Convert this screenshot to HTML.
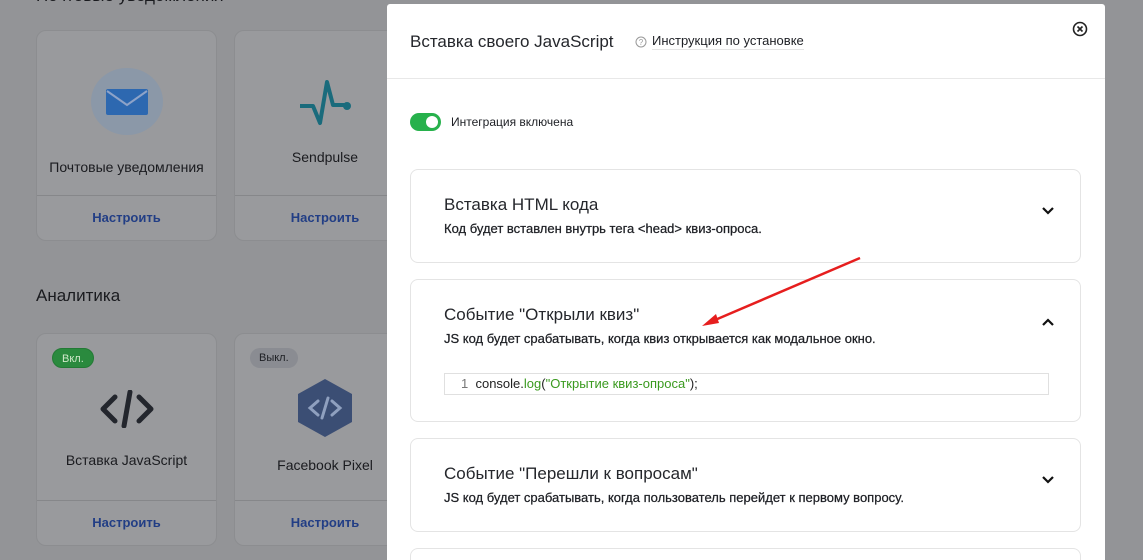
<!DOCTYPE html>
<html style="overflow:hidden;width:1143px;height:560px"><head><meta charset="utf-8"><style>
*{box-sizing:border-box;margin:0;padding:0}
body{width:1143px;height:560px;overflow:hidden;background:#939497;font-family:"Liberation Sans","Noto Sans CJK SC",sans-serif;position:relative;color:#1d1f24}
.card{position:absolute;background:#999a9d;border:1px solid #8c8d90;border-radius:10px}
.card .ft{position:absolute;left:0;right:0;bottom:0;height:45px;border-top:1px solid #86878a;text-align:center;line-height:44px;font-size:13px;font-weight:bold;color:#223e85}
.card .nm{position:absolute;left:0;right:0;text-align:center;font-size:14px;color:#1a1b1f}
.badge{position:absolute;top:14px;left:15px;height:20px;border-radius:10px;font-size:11px;line-height:20px;padding:0 9px}
.modal{position:absolute;left:387px;top:4px;width:718px;height:556px;background:#fff;border-radius:3px 3px 0 0;overflow:hidden}
.acc{position:absolute;left:23px;width:671px;border:1px solid #e4e4e4;border-radius:8px;background:#fff}
.acc h3{position:absolute;left:33px;font-weight:normal;font-size:17px;color:#25272c}
.acc p{position:absolute;left:33px;font-size:13px;color:#1d1f24;-webkit-text-stroke:0.25px #1d1f24}
.chev{position:absolute;right:25px;width:14px;height:10px}
</style></head><body>
<div style="position:absolute;left:36px;top:-14px;font-size:17px;color:#1a1b1f">Почтовые уведомления</div>
<div class="card" style="left:36px;top:30px;width:181px;height:211px">
 <div style="position:absolute;left:54px;top:37px;width:72px;height:67px;border-radius:50%;background:#8b98a8"></div>
 <svg style="position:absolute;left:68px;top:57px" width="44" height="28"><rect x="1" y="1" width="42" height="26" rx="2" fill="#2d68b0"/><path d="M2 3 L22 17 L42 3" stroke="#8ea3c8" stroke-width="2" fill="none"/></svg>
 <div class="nm" style="top:128px">Почтовые уведомления</div>
 <div class="ft">Настроить</div>
</div>
<div class="card" style="left:234px;top:30px;width:200px;height:211px">
 <svg style="position:absolute;left:63px;top:48px" width="54" height="48"><path d="M2 27 H15 L22 44 L29 3 L35 26 H48" stroke="#1a6b7c" stroke-width="4" fill="none" stroke-linejoin="round"/><circle cx="49" cy="27" r="4" fill="#1a6b7c"/></svg>
 <div class="nm" style="top:118px;width:180px">Sendpulse</div>
 <div class="ft" style="width:180px">Настроить</div>
</div>
<div style="position:absolute;left:36px;top:286px;font-size:17px;color:#1a1b1f">Аналитика</div>
<div class="card" style="left:36px;top:333px;width:181px;height:213px">
 <div class="badge" style="background:#2a8a3e;color:#cfe8c9;border:1px solid #237a35">Вкл.</div>
 <svg style="position:absolute;left:62px;top:56px" width="56" height="38"><path d="M16 7 L4 19 L16 31 M40 7 L52 19 L40 31 M31 2 L25 36" stroke="#23262d" stroke-width="5" fill="none" stroke-linecap="round" stroke-linejoin="round"/></svg>
 <div class="nm" style="top:118px">Вставка JavaScript</div>
 <div class="ft">Настроить</div>
</div>
<div class="card" style="left:234px;top:333px;width:200px;height:213px">
 <div class="badge" style="background:#8a8c92;color:#1d1f24">Выкл.</div>
 <svg style="position:absolute;left:63px;top:45px" width="54" height="58"><polygon points="27,0 54,15 54,43 27,58 0,43 0,15" fill="#3b4e74"/><path d="M20 22 L12 29 L20 36 M34 22 L42 29 L34 36 M30 19 L24 39" stroke="#8fa0bf" stroke-width="3" fill="none" stroke-linecap="round"/></svg>
 <div class="nm" style="top:123px;width:180px">Facebook Pixel</div>
 <div class="ft" style="width:180px">Настроить</div>
</div>

<div class="modal">
 <div style="position:absolute;left:23px;top:28px;font-size:17px;color:#25272c">Вставка своего JavaScript</div>
 <svg style="position:absolute;left:248px;top:32px" width="12" height="12"><circle cx="6" cy="6" r="5" stroke="#999" fill="none"/><text x="6" y="9" font-size="8" text-anchor="middle" fill="#999" font-family="Liberation Sans">?</text></svg>
 <div style="position:absolute;left:265px;top:29px;font-size:13px;color:#1d1f24;border-bottom:1px solid #e5e5e5;padding-bottom:1px">Инструкция по установке</div>
 <svg style="position:absolute;left:685px;top:17px" width="16" height="16"><circle cx="8" cy="8" r="6.5" stroke="#222" stroke-width="1.6" fill="none"/><path d="M5.5 5.5 L10.5 10.5 M10.5 5.5 L5.5 10.5" stroke="#222" stroke-width="1.6"/></svg>
 <div style="position:absolute;left:0;right:0;top:74px;border-top:1px solid #e8e8e8"></div>
 <div style="position:absolute;left:23px;top:109px;width:31px;height:18px;border-radius:9px;background:#27b14c"><div style="position:absolute;right:3px;top:3px;width:12px;height:12px;border-radius:50%;background:#fff"></div></div>
 <div style="position:absolute;left:64px;top:111px;font-size:12px;color:#1d1f24">Интеграция включена</div>

 <div class="acc" style="top:165px;height:94px">
  <h3 style="top:25px">Вставка HTML кода</h3>
  <p style="top:51px">Код будет вставлен внутрь тега &lt;head&gt; квиз-опроса.</p>
  <svg class="chev" style="top:36px" viewBox="0 0 14 10"><path d="M2 2 L7 7 L12 2" stroke="#111" stroke-width="2.2" fill="none"/></svg>
 </div>
 <div class="acc" style="top:275px;height:143px">
  <h3 style="top:25px">Событие "Открыли квиз"</h3>
  <p style="top:51px">JS код будет срабатывать, когда квиз открывается как модальное окно.</p>
  <svg class="chev" style="top:37px" viewBox="0 0 14 10"><path d="M2 8 L7 3 L12 8" stroke="#111" stroke-width="2.2" fill="none"/></svg>
  <div style="position:absolute;left:33px;top:93px;width:605px;height:22px;border:1px solid #e0e0e0;font-size:13px;line-height:20px;padding-left:16px;color:#222"><span style="color:#777">1</span>&nbsp; console.<span style="color:#3a9a1f">log</span>(<span style="color:#3a9a1f">"Открытие квиз-опроса"</span>);</div>
 </div>
 <div class="acc" style="top:434px;height:94px">
  <h3 style="top:25px">Событие "Перешли к вопросам"</h3>
  <p style="top:51px">JS код будет срабатывать, когда пользователь перейдет к первому вопросу.</p>
  <svg class="chev" style="top:36px" viewBox="0 0 14 10"><path d="M2 2 L7 7 L12 2" stroke="#111" stroke-width="2.2" fill="none"/></svg>
 </div>
 <div style="position:absolute;left:23px;top:544px;width:671px;height:12px;border:1px solid #e4e4e4;border-bottom:none;border-radius:8px 8px 0 0"></div>
</div>
<svg style="position:absolute;left:0;top:0" width="1143" height="560"><path d="M860 258 L708 323" stroke="#e61e1e" stroke-width="2.5"/><polygon points="702,326 716,314 719,323" fill="#e61e1e"/></svg>
</body></html>
